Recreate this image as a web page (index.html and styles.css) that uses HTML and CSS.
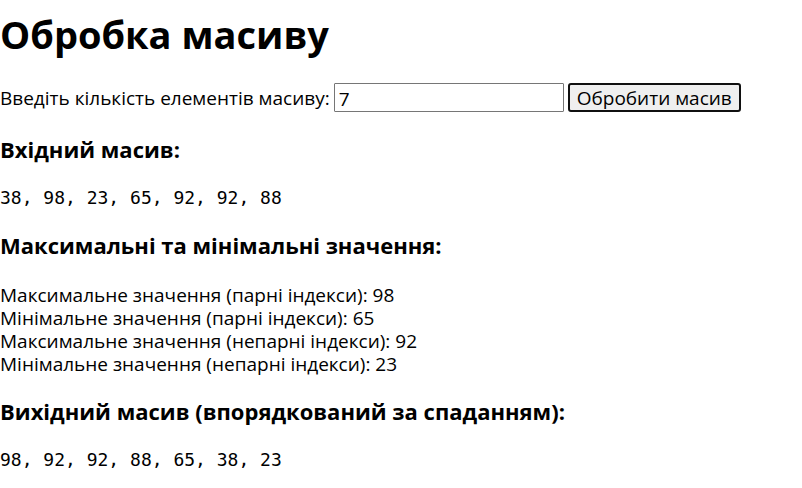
FILE: index.html
```html
<!DOCTYPE html>
<html lang="uk">
<head>
<meta charset="utf-8">
<title>Обробка масиву</title>
<link rel="stylesheet" href="styles.css">
</head>
<body>
<main>
  <h1>Обробка масиву</h1>
  <form class="controls">
    <label for="count">Введіть кількість елементів масиву:</label>
    <input class="count" id="count" type="text" inputmode="numeric" value="7">
    <button class="process" type="button">Обробити масив</button>
  </form>
  <h3>Вхідний масив:</h3>
  <pre>38, 98, 23, 65, 92, 92, 88</pre>
  <h3>Максимальні та мінімальні значення:</h3>
  <p class="results">
    Максимальне значення (парні індекси): 98<br>
    Мінімальне значення (парні індекси): 65<br>
    Максимальне значення (непарні індекси): 92<br>
    Мінімальне значення (непарні індекси): 23
  </p>
  <h3>Вихідний масив (впорядкований за спаданням):</h3>
  <pre>98, 92, 92, 88, 65, 38, 23</pre>
</main>
</body>
</html>
```
FILE: styles.css
```css
body {
  margin: 0;
  background: #fff;
  color: #000;
  font: 19px/23px "Segoe UI", "Open Sans", "Noto Sans", sans-serif;
}

h1 {
  margin: 7px 0 21px;
  font-size: 38px;
  line-height: 55px;
}

h3 {
  margin: 21px 0 24px;
  font-size: 22px;
  line-height: 28px;
}

.controls {
  display: flex;
  align-items: center;
  gap: 4px;
  margin-bottom: 23px;
}

.count,
.process {
  box-sizing: border-box;
  height: 29px;
  font: inherit;
  color: #000;
}

.count {
  width: 230px;
  padding: 2px 4px 0;
  border: 1px solid #767676;
  border-radius: 1px;
  background: #fff;
}

.process {
  padding: 2px 7px 0;
  border: 2px solid #101010;
  border-radius: 3px;
  background: #efefef;
}

label {
  padding-top: 2px;
}

pre {
  margin: 24px 0 22px;
  font: 18px/22px Consolas, "DejaVu Sans Mono", monospace;
}

.results {
  margin: 25px 0 21px;
}
```
